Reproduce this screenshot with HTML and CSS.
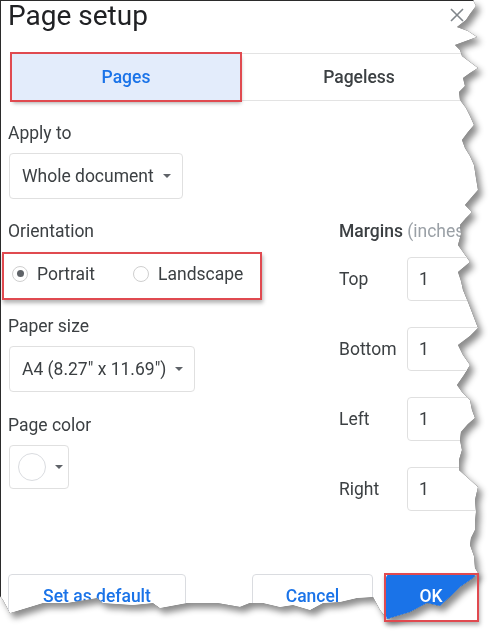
FILE: index.html
```html
<!DOCTYPE html>
<html lang="en">
<head>
    <meta charset="UTF-8">
    <meta name="viewport" content="width=device-width, initial-scale=1.0">
    <title>Page setup</title>
    <link rel="stylesheet" href="styles.css">
</head>
<body>
    <div class="page">
        <div class="frame">
            <div class="dialog">
                <div class="header">
                    <h1>Page setup</h1>
                    <svg class="close" width="14" height="14" viewBox="0 0 14 14">
                        <path d="M1 1 L13 13 M13 1 L1 13" stroke="#80868b" stroke-width="1.6" fill="none"/>
                    </svg>
                </div>

                <div class="tabs">
                    <div class="tab active">Pages</div>
                    <div class="tab">Pageless</div>
                </div>

                <div class="label first">Apply to</div>
                <div class="select apply"><span>Whole document</span><span class="arrow"></span></div>

                <div class="columns">
                    <div class="left">
                        <div class="label">Orientation</div>
                        <div class="radios">
                            <span class="radio checked"></span>
                            <span class="radio-text">Portrait</span>
                            <span class="radio"></span>
                            <span class="radio-text">Landscape</span>
                        </div>

                        <div class="label paper">Paper size</div>
                        <div class="select paper-select"><span>A4 (8.27" x 11.69")</span><span class="arrow"></span></div>

                        <div class="label color">Page color</div>
                        <div class="color-btn">
                            <span class="swatch"></span>
                            <span class="arrow"></span>
                        </div>
                    </div>

                    <div class="right">
                        <div class="label"><b>Margins</b> <span class="unit">(inches)</span></div>
                        <div class="margin-row first-row">
                            <span class="margin-label">Top</span>
                            <div class="num">1</div>
                        </div>
                        <div class="margin-row">
                            <span class="margin-label">Bottom</span>
                            <div class="num">1</div>
                        </div>
                        <div class="margin-row">
                            <span class="margin-label">Left</span>
                            <div class="num">1</div>
                        </div>
                        <div class="margin-row">
                            <span class="margin-label">Right</span>
                            <div class="num">1</div>
                        </div>
                    </div>
                </div>

                <div class="footer">
                    <button class="btn default">Set as default</button>
                    <div class="footer-right">
                        <button class="btn cancel">Cancel</button>
                        <button class="btn ok">OK</button>
                    </div>
                </div>
            </div>
        </div>
        <!-- annotation box drawn over the torn edge -->
        <div class="mark-ok"></div>
    </div>
</body>
</html>
```

FILE: styles.css
```css
body {
    margin: 0;
    background-color: #fff;
    font-family: Roboto, "Liberation Sans", sans-serif;
    color: #3c4043;
}

.page {
    position: relative;
    width: 501px;
    height: 643px;
    overflow: hidden;
}

.frame {
    filter: drop-shadow(0 0 0.7px rgba(0, 0, 0, 0.9)) drop-shadow(4px 5px 3px rgba(0, 0, 0, 0.45));
}

.dialog {
    width: 484px;
    height: 630px;
    box-sizing: border-box;
    background-color: #fff;
    border-top: 1px solid #2b2b2b;
    border-left: 1px solid #2b2b2b;
    padding: 0 8px 0 7px;
    clip-path: polygon(0 0, 473px 0, 476px 6px, 470px 14px, 466px 20px, 457px 27px, 468px 31px, 477px 37px, 466px 41px, 455px 45px, 460px 50px, 462px 56px, 470px 62px, 478px 68px, 470px 73px, 463px 78px, 465px 86px, 459px 92px, 460px 100px, 466px 108px, 470px 116px, 474px 125px, 468px 132px, 462px 140px, 465px 148px, 470px 156px, 474px 165px, 476px 178px, 478px 190px, 471px 198px, 465px 205px, 472px 212px, 466px 218px, 460px 225px, 461px 234px, 458px 245px, 463px 252px, 470px 262px, 464px 267px, 458px 272px, 461px 281px, 463px 290px, 468px 302px, 473px 315px, 478px 328px, 470px 336px, 458px 345px, 463px 355px, 470px 365px, 464px 375px, 457px 385px, 462px 392px, 470px 400px, 472px 410px, 475px 418px, 468px 424px, 461px 432px, 460px 440px, 462px 450px, 459px 460px, 459px 470px, 468px 478px, 478px 487px, 475px 500px, 476px 512px, 475px 522px, 475px 530px, 471px 538px, 470px 545px, 474px 556px, 475px 568px, 478px 573px, 473px 578px, 460px 587px, 453px 594px, 440px 606px, 427px 603px, 410px 612px, 387px 619px, 380px 610px, 373px 597px, 357px 598px, 340px 602px, 323px 603px, 310px 610px, 293px 605px, 280px 607px, 263px 603px, 250px 603px, 240px 607px, 217px 603px, 187px 603px, 160px 608px, 153px 603px, 133px 605px, 103px 603px, 97px 598px, 67px 603px, 43px 603px, 20px 610px, 10px 613px, 3px 600px, 0 596px);
}

.header {
    height: 52px;
    display: flex;
    justify-content: space-between;
    align-items: flex-start;
}

h1 {
    margin: 0;
    font-size: 28px;
    font-weight: 400;
    line-height: 30px;
    color: #202124;
}

.close {
    margin: 7px 12px 0 0;
}

.tabs {
    display: flex;
    margin-left: 4px;
    border-top: 1px solid #e3e3e3;
    border-bottom: 1px solid #e3e3e3;
    height: 46px;
}

.tab {
    display: flex;
    align-items: center;
    justify-content: center;
    font-size: 17.5px;
    font-weight: 500;
    color: #3c4043;
    width: 238px;
    flex-shrink: 0;
}

.tab.active {
    width: 228px;
    background-color: #e3ecfb;
    color: #1a73e8;
    outline: 2px solid #e04a50;
    box-shadow: 1px 3px 4px rgba(0, 0, 0, 0.35);
}

.label {
    font-size: 17.5px;
    line-height: 24px;
    color: #3c4043;
}

.label.first {
    margin-top: 20px;
}

.label b {
    font-weight: 500;
}

.unit {
    color: #9aa0a6;
}

.select {
    display: flex;
    align-items: center;
    gap: 9px;
    height: 46px;
    box-sizing: border-box;
    margin: 8px 0 0 1px;
    padding: 0 12px;
    border: 1px solid #e0e0e0;
    border-radius: 4px;
    font-size: 17.5px;
    color: #3c4043;
    white-space: nowrap;
}

.apply {
    width: 174px;
}

.paper-select {
    width: 186px;
}

.arrow {
    flex-shrink: 0;
    width: 0;
    height: 0;
    border-left: 4px solid transparent;
    border-right: 4px solid transparent;
    border-top: 4px solid #5f6368;
}

.columns {
    display: flex;
    margin-top: 20px;
}

.left {
    width: 331px;
    flex-shrink: 0;
}

.right {
    min-width: 0;
}

.radios {
    display: flex;
    align-items: center;
    width: 260px;
    height: 48px;
    box-sizing: border-box;
    margin: 9px 0 0 -6px;
    padding: 0 0 5px 8px;
    border: 2px solid #e04a50;
    box-shadow: 1px 3px 4px rgba(0, 0, 0, 0.3);
    font-size: 17.5px;
    white-space: nowrap;
}

.radio {
    flex-shrink: 0;
    width: 16px;
    height: 16px;
    box-sizing: border-box;
    border: 1.5px solid #cfcfcf;
    border-radius: 50%;
    display: flex;
    align-items: center;
    justify-content: center;
}

.radio.checked::after {
    content: "";
    width: 7px;
    height: 7px;
    border-radius: 50%;
    background-color: #5f6368;
}

.radio-text {
    margin-left: 9px;
    margin-right: 38px;
}

.label.paper {
    margin-top: 14px;
}

.label.color {
    margin-top: 21px;
}

.color-btn {
    display: flex;
    align-items: center;
    gap: 9px;
    width: 60px;
    height: 44px;
    box-sizing: border-box;
    margin: 8px 0 0 1px;
    padding-left: 8px;
    border: 1px solid #e0e0e0;
    border-radius: 4px;
}

.swatch {
    flex-shrink: 0;
    width: 28px;
    height: 28px;
    box-sizing: border-box;
    border: 1px solid #dadce0;
    border-radius: 50%;
}

.right .label {
    white-space: nowrap;
}

.margin-row {
    display: flex;
    align-items: center;
    margin-top: 26px;
    font-size: 17.5px;
}

.margin-row.first-row {
    margin-top: 14px;
}

.margin-label {
    width: 68px;
    flex-shrink: 0;
}

.num {
    flex-shrink: 0;
    width: 80px;
    height: 44px;
    box-sizing: border-box;
    padding-left: 11px;
    border: 1px solid #e0e0e0;
    border-radius: 4px;
    display: flex;
    align-items: center;
}

.footer {
    display: flex;
    justify-content: space-between;
    margin-top: 63px;
}

.footer-right {
    display: flex;
    gap: 13px;
}

.btn {
    height: 46px;
    box-sizing: border-box;
    border: 1px solid #dadce0;
    border-radius: 4px;
    background-color: #fff;
    font-family: Roboto, "Liberation Sans", sans-serif;
    font-size: 17.5px;
    font-weight: 500;
    color: #1a73e8;
    padding: 0 0 3px;
}

.default {
    width: 178px;
}

.cancel {
    width: 121px;
}

.ok {
    width: 90px;
    background-color: #1a73e8;
    border-color: #1a73e8;
    color: #fff;
}

.mark-ok {
    position: absolute;
    left: 384px;
    top: 573px;
    width: 95px;
    height: 49px;
    box-sizing: border-box;
    border: 2px solid #e04a50;
    box-shadow: 1px 3px 4px rgba(0, 0, 0, 0.3);
}
```
